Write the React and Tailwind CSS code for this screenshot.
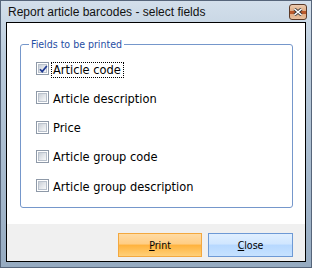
import React from "react";

const ui = "font-['DejaVu_Sans_Condensed','DejaVu_Sans',sans-serif] font-stretch-condensed";

function Check({ checked }) {
  return (
    <div className="w-[13px] h-[13px] shrink-0 border border-[#8e99a8] bg-white p-[1px]">
      <div className="relative w-full h-full border border-[#b9c1cc] bg-[linear-gradient(135deg,#c9cfd7_0%,#e4e7eb_55%,#f7f8f9_100%)]">
        {checked && (
          <svg className="absolute left-[-1px] top-[-1px]" width="11" height="11" viewBox="0 0 11 11">
            <path d="M2 5.2 L4.2 7.6 L8.8 2" fill="none" stroke="#1f3a93" strokeWidth="1.7" />
          </svg>
        )}
      </div>
    </div>
  );
}

function Row({ label, checked, focused }) {
  return (
    <div className="flex items-center h-[13px]">
      <Check checked={checked} />
      <span
        className={
          "ml-[2px] mt-[2px] pl-[1px] pr-[2px] leading-[14px] text-[12.7px] text-black whitespace-nowrap border border-dotted " +
          (focused ? "border-black" : "border-transparent")
        }
      >
        {label}
      </span>
    </div>
  );
}

function CloseBtn() {
  return (
    <div className="w-[18px] h-[16px] rounded-[3px] border border-[#5b3a28] overflow-hidden relative bg-[linear-gradient(to_bottom,#edcdb2_0%,#e0ad86_40%,#b9582a_42%,#b9582a_62%,#e2ae86_64%,#e8c09f_100%)]">
      <svg className="absolute left-[3px] top-[3px]" width="10" height="8" viewBox="0 0 10 8">
        <path d="M1.5 1 L8.5 7 M8.5 1 L1.5 7" stroke="#3a3a3a" strokeWidth="3.2" />
        <path d="M1.5 1 L8.5 7 M8.5 1 L1.5 7" stroke="#ffffff" strokeWidth="1.6" />
      </svg>
    </div>
  );
}

export default function App() {
  const rows = [
    { label: "Article code", checked: true, focused: true },
    { label: "Article description" },
    { label: "Price" },
    { label: "Article group code" },
    { label: "Article group description" },
  ];
  return (
    <div className="w-[312px] h-[268px] border border-[#56657a] bg-[linear-gradient(to_bottom,#d3dfeb_0%,#bccddd_20%,#96abc1_100%)] flex flex-col">
      <div className="h-[21px] shrink-0 flex items-center justify-between pl-[7px] pr-[4px]">
        <span className="font-['Liberation_Sans',Arial,sans-serif] text-[12px] text-[#111] leading-none">
          Report article barcodes - select fields
        </span>
        <CloseBtn />
      </div>
      <div className="mx-[5px] mb-[5px] flex-1 border border-black flex flex-col">
        <div className={"flex-1 bg-white flex flex-col " + ui}>
          <fieldset className="mt-[15px] ml-[13px] mr-[12px] border border-[#7597cb] rounded-[3px]">
            <legend className="ml-[8px] px-[2px] text-[10.5px] leading-[12px] text-[#1f4ea3]">
              Fields to be printed
            </legend>
            <div className="pt-[12px] pb-[15px] pl-[15px] flex flex-col gap-y-[16.25px]">
              {rows.map((r) => (
                <Row key={r.label} {...r} />
              ))}
            </div>
          </fieldset>
        </div>
        <div className={"h-[37px] shrink-0 bg-[#f0f0f0] flex justify-end gap-[6px] pt-[9px] pr-[12px] " + ui}>
          <button className="w-[84px] h-[24px] border border-[#f3a83f] bg-[linear-gradient(to_bottom,#ffdba4_0%,#ffcd84_46%,#ffb23c_50%,#ffd079_100%)] text-[10.5px] text-black leading-none">
            <span className="underline">P</span>rint
          </button>
          <button className="w-[85px] h-[24px] border border-[#6d99d5] bg-[linear-gradient(to_bottom,#e0efff_0%,#d0e6ff_46%,#b6d8ff_50%,#c7e2ff_100%)] text-[10.5px] text-black leading-none">
            <span className="underline">C</span>lose
          </button>
        </div>
      </div>
    </div>
  );
}
